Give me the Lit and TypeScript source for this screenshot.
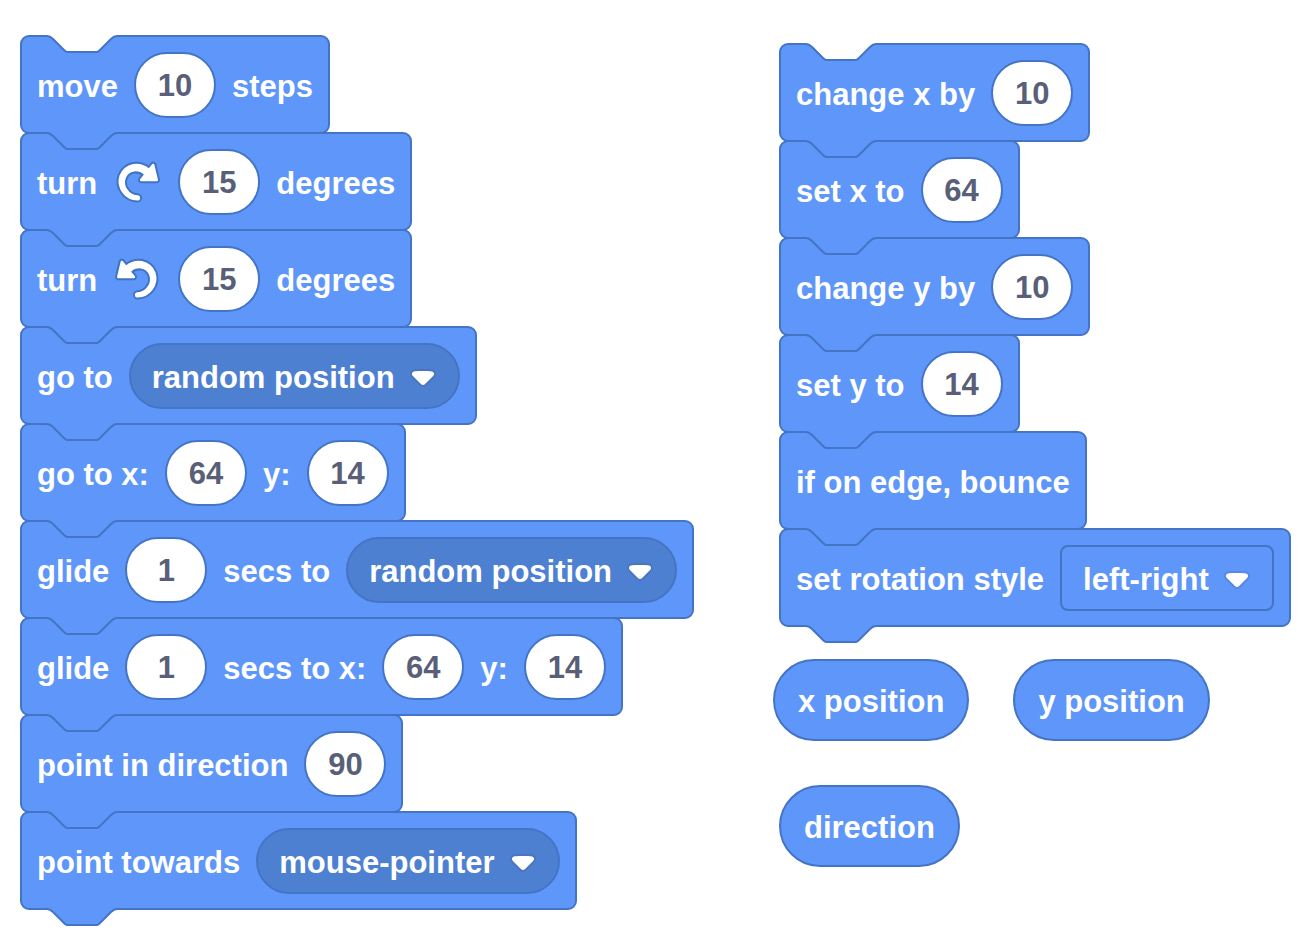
import { LitElement, html, css, svg } from "lit";
import { customElement, property } from "lit/decorators.js";

type Part =
  | { kind: "text"; text: string }
  | { kind: "number"; value: number; name: string }
  | { kind: "menu"; value: string; name: string; square?: boolean }
  | { kind: "turn"; direction: "right" | "left" };

const t = (text: string): Part => ({ kind: "text", text });
const n = (value: number, name: string): Part => ({ kind: "number", value, name });
const m = (value: string, name: string, square = false): Part => ({ kind: "menu", value, name, square });

const movement: Part[][] = [
  [t("move"), n(10, "steps to move"), t("steps")],
  [t("turn"), { kind: "turn", direction: "right" }, n(15, "degrees clockwise"), t("degrees")],
  [t("turn"), { kind: "turn", direction: "left" }, n(15, "degrees counterclockwise"), t("degrees")],
  [t("go to"), m("random position", "go to target")],
  [t("go to x:"), n(64, "go to x"), t("y:"), n(14, "go to y")],
  [t("glide"), n(1, "glide seconds"), t("secs to"), m("random position", "glide target")],
  [t("glide"), n(1, "glide seconds"), t("secs to x:"), n(64, "glide to x"), t("y:"), n(14, "glide to y")],
  [t("point in direction"), n(90, "direction in degrees")],
  [t("point towards"), m("mouse-pointer", "point towards target")],
];

const placement: Part[][] = [
  [t("change x by"), n(10, "change x by")],
  [t("set x to"), n(64, "set x to")],
  [t("change y by"), n(10, "change y by")],
  [t("set y to"), n(14, "set y to")],
  [t("if on edge, bounce")],
  [t("set rotation style"), m("left-right", "rotation style", true)],
];

// The connector outline shared by the notch at a block's top and the tab under a stack.
const CONNECTOR =
  "c2,0 4,1 6,3 l10,10 c2,2 3,3 4,3 h30 c1,0 2,-1 4,-3 l10,-10 c2,-2 4,-3 6,-3";

const connector = (cls: string) => html`
  <svg class="connector ${cls}" viewBox="0 -1 70 18" aria-hidden="true">
    ${svg`<path class="fill" d="M0,-1.2 L0,0 ${CONNECTOR} L70,-1.2 Z"></path>
    <path class="line" d="M0,0 ${CONNECTOR}"></path>`}
  </svg>
`;

@customElement("motion-block")
class MotionBlock extends LitElement {
  @property({ attribute: false }) parts: Part[] = [];
  @property({ type: Boolean }) first = false;
  @property({ type: Boolean }) last = false;

  static styles = css`
    :host {
      display: block;
      --fill: #5e96f9;
      --line: #4474c6;
      --menu: #4e80d2;
    }
    .block {
      position: relative;
      box-sizing: border-box;
      display: flex;
      align-items: center;
      gap: 16px;
      width: max-content;
      height: 99px;
      padding: 0 15px;
      border: 2px solid var(--line);
      border-radius: 9px;
      background: var(--fill);
    }
    .connector {
      position: absolute;
      left: 25px;
      width: 70px;
      height: 18px;
      overflow: visible;
    }
    .top { top: -2px; }
    .bottom { top: 95px; }
    .fill { fill: var(--fill); }
    .open .fill { fill: #fff; }
    .line { fill: none; stroke: var(--line); stroke-width: 2; }
    .text, .number, .menu {
      font: bold 31px/36px "Liberation Sans", Arial, sans-serif;
    }
    .text {
      padding-top: 4px;
      color: #fff;
      white-space: nowrap;
    }
    .number {
      box-sizing: border-box;
      width: 82px;
      height: 66px;
      margin: 0;
      padding: 3px 0 0;
      border: 2px solid var(--line);
      border-radius: 33px;
      outline: none;
      background: #fff;
      color: #595f78;
      text-align: center;
    }
    .picker {
      position: relative;
      display: flex;
    }
    .menu {
      appearance: none;
      box-sizing: border-box;
      height: 66px;
      margin: 0;
      padding: 4px 63px 0 21px;
      border: 2px solid var(--line);
      border-radius: 33px;
      outline: none;
      background: var(--menu);
      color: #fff;
    }
    .square {
      border-radius: 8px;
      background: var(--fill);
    }
    .arrow {
      position: absolute;
      right: 24px;
      top: 26px;
      width: 26px;
      height: 18px;
      pointer-events: none;
    }
    .shade { fill: #231f20; opacity: 0.1; }
    .turn { width: 49px; height: 49px; }
    .left { transform: scaleX(-1); }
    .edge { fill: #3f74c4; }
    .white { fill: #fff; }
  `;

  private part(p: Part) {
    switch (p.kind) {
      case "text":
        return html`<span class="text">${p.text}</span>`;
      case "number":
        return html`<input class="number" type="text" inputmode="numeric" aria-label=${p.name} .value=${String(p.value)}>`;
      case "menu":
        return html`<span class="picker">
          <select class="menu ${p.square ? "square" : ""}" aria-label=${p.name}><option>${p.value}</option></select>
          <svg class="arrow" viewBox="0 0 12.71 8.79" aria-hidden="true">
            <path class="shade" d="M12.71,2.44A2.41,2.41,0,0,1,12,4.16L8.08,8.08a2.45,2.45,0,0,1-3.45,0L0.72,4.16A2.42,2.42,0,0,1,0,2.44,2.48,2.48,0,0,1,.71.71C1,0.47,1.43,0,6.36,0S11.75,0.46,12,.71A2.44,2.44,0,0,1,12.71,2.44Z"></path>
            <path class="white" d="M6.36,7.79a1.43,1.43,0,0,1-1-.42L1.42,3.45a1.44,1.44,0,0,1,0-2c0.56-.56,9.31-0.56,9.87,0a1.44,1.44,0,0,1,0,2L7.37,7.37A1.43,1.43,0,0,1,6.36,7.79Z"></path>
          </svg>
        </span>`;
      case "turn":
        return html`<svg class="turn ${p.direction}" viewBox="0 0 24 24" aria-hidden="true">
          <path class="edge" d="M22.68,12.2a1.6,1.6,0,0,1-1.27.63H13.72a1.59,1.59,0,0,1-1.16-2.58l1.12-1.41a4.82,4.82,0,0,0-3.14-.77,4.31,4.31,0,0,0-2,.8,4.25,4.25,0,0,0-1.34,1.73,5.06,5.06,0,0,0,.54,4.62A5.58,5.58,0,0,0,12,17.74h0a2.26,2.26,0,0,1-.16,4.52A10.25,10.25,0,0,1,3.74,18,10.14,10.14,0,0,1,2.25,8.78,9.7,9.7,0,0,1,5.08,4.64,9.92,9.92,0,0,1,9.66,2.5a10.66,10.66,0,0,1,7.72,1.68l1.08-1.35a1.57,1.57,0,0,1,1.24-.6,1.6,1.6,0,0,1,1.54,1.21l1.7,7.37A1.57,1.57,0,0,1,22.68,12.2Z"></path>
          <path class="white" d="M21.38,11.83H13.77a.59.59,0,0,1-.43-1l1.75-2.19a5.9,5.9,0,0,0-4.7-1.58,5.07,5.07,0,0,0-4.11,3.17A6,6,0,0,0,7,15.77a6.51,6.51,0,0,0,5,2.92,1.31,1.31,0,0,1-.08,2.62,9.3,9.3,0,0,1-7.35-3.82A9.16,9.16,0,0,1,3.17,9.12,8.51,8.51,0,0,1,5.71,5.4,8.76,8.76,0,0,1,9.82,3.48a9.71,9.71,0,0,1,7.75,2.07l1.67-2.1a.59.59,0,0,1,1,.21L22,11.08A.59.59,0,0,1,21.38,11.83Z"></path>
        </svg>`;
    }
  }

  render() {
    return html`<div class="block">
      ${connector(this.first ? "top open" : "top")}
      ${this.parts.map((p) => this.part(p))}
      ${this.last ? connector("bottom") : ""}
    </div>`;
  }
}

@customElement("app-root")
class AppRoot extends LitElement {
  static styles = css`
    :host {
      display: block;
      background: #fff;
    }
    .workspace {
      display: grid;
      grid-template-columns: 753fr 541fr;
      align-items: start;
      padding: 35px 0 20px 20px;
    }
    .stack {
      display: flex;
      flex-direction: column;
    }
    .joined { margin-top: -2px; }
    .side { padding-top: 8px; }
    .side .stack, .reporter.lone { margin-left: 6px; }
    .reporters {
      display: flex;
      flex-wrap: wrap;
      gap: 44px;
      padding-top: 32px;
    }
    .reporter {
      box-sizing: border-box;
      height: 82px;
      margin: 0;
      padding: 4px 23px 0;
      border: 2px solid #4474c6;
      border-radius: 41px;
      background: #5e96f9;
      color: #fff;
      font: bold 31px/36px "Liberation Sans", Arial, sans-serif;
      white-space: nowrap;
    }
  `;

  private stack(blocks: Part[][]) {
    return html`<div class="stack">
      ${blocks.map(
        (parts, i) => html`<motion-block
          class=${i ? "joined" : ""}
          .parts=${parts}
          ?first=${i === 0}
          ?last=${i === blocks.length - 1}
        ></motion-block>`
      )}
    </div>`;
  }

  render() {
    return html`<main class="workspace">
      ${this.stack(movement)}
      <section class="side">
        ${this.stack(placement)}
        <div class="reporters">
          <button class="reporter">x position</button>
          <button class="reporter">y position</button>
          <button class="reporter lone">direction</button>
        </div>
      </section>
    </main>`;
  }
}
